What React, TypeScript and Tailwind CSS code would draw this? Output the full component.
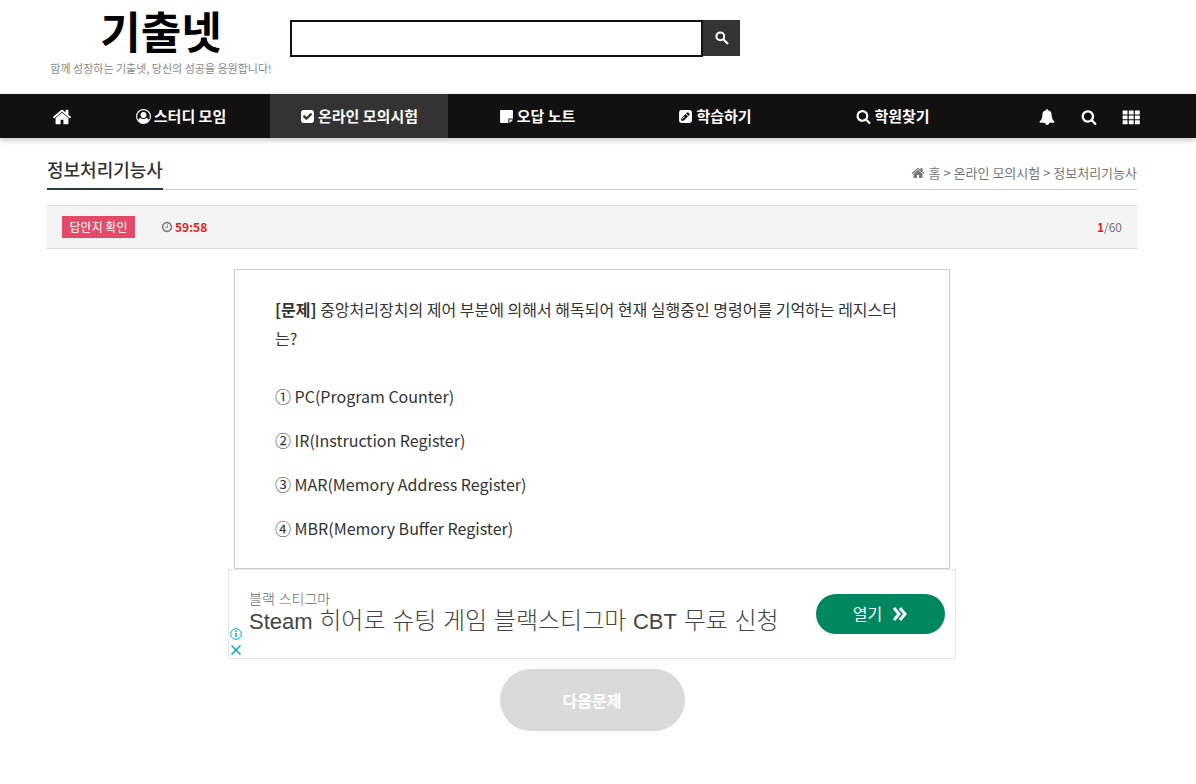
import type { ReactNode } from "react";

type IconProps = { className?: string };

function Glyph({ className, children }: IconProps & { children: ReactNode }) {
  return (
    <svg viewBox="0 0 1792 1792" fill="currentColor" aria-hidden="true" className={className}>
      {children}
    </svg>
  );
}

const HomeIcon = ({ className }: IconProps) => (
  <Glyph className={className}>
    <path d="M1472 992v480q0 26-19 45t-45 19h-384v-384h-256v384h-384q-26 0-45-19t-19-45v-480q0-1 .5-3t.5-3l575-474 575 474q1 2 1 6zm223-69l-62 74q-8 9-21 11h-3q-13 0-21-7l-692-577-692 577q-12 8-24 7-13-2-21-11l-62-74q-8-10-7-23.5t11-21.5l719-599q32-26 76-26t76 26l244 204v-195q0-14 9-23t23-9h192q14 0 23 9t9 23v408l219 182q10 8 11 21.5t-7 23.5z" />
  </Glyph>
);

const SearchIcon = ({ className }: IconProps) => (
  <Glyph className={className}>
    <path d="M1216 832q0-185-131.5-316.5t-316.5-131.5-316.5 131.5-131.5 316.5 131.5 316.5 316.5 131.5 316.5-131.5 131.5-316.5zm512 832q0 52-38 90t-90 38q-54 0-90-38l-343-342q-179 124-399 124-143 0-273.5-55.5t-225-150-150-225-55.5-273.5 55.5-273.5 150-225 225-150 273.5-55.5 273.5 55.5 225 150 150 225 55.5 273.5q0 220-124 399l343 343q37 37 37 90z" />
  </Glyph>
);

const BellIcon = ({ className }: IconProps) => (
  <Glyph className={className}>
    <path d="M912 1696q0-16-16-16-59 0-101.5-42.5t-42.5-101.5q0-16-16-16t-16 16q0 73 51.5 124.5t124.5 51.5q16 0 16-16zm816-288q0 52-38 90t-90 38h-448q0 106-75 181t-181 75-181-75-75-181h-448q-52 0-90-38t-38-90q50-42 91-88t85-119.5 74.5-158.5 50-206 19.5-260q0-152 117-282.5t307-158.5q-8-19-8-39 0-40 28-68t68-28 68 28 28 68q0 20-8 39 190 28 307 158.5t117 282.5q0 139 19.5 260t50 206 74.5 158.5 85 119.5 91 88z" />
  </Glyph>
);

const GridIcon = ({ className }: IconProps) => (
  <Glyph className={className}>
    {[256, 736, 1216].map((y) =>
      [64, 672, 1280].map((x) => <rect key={`${x}-${y}`} x={x} y={y} width="490" height="390" rx="50" />)
    )}
  </Glyph>
);

const ClockIcon = ({ className }: IconProps) => (
  <Glyph className={className}>
    <path d="M1024 544v448q0 14-9 23t-23 9h-320q-14 0-23-9t-9-23v-64q0-14 9-23t23-9h224v-352q0-14 9-23t23-9h64q14 0 23 9t9 23zm416 352q0-148-73-273t-198-198-273-73-273 73-198 198-73 273 73 273 198 198 273 73 273-73 198-198 73-273zm224 0q0 209-103 385.5t-279.5 279.5-385.5 103-385.5-103-279.5-279.5-103-385.5 103-385.5 279.5-279.5 385.5-103 385.5 103 279.5 279.5 103 385.5z" />
  </Glyph>
);

const UserIcon = ({ className }: IconProps) => (
  <Glyph className={className}>
    <circle cx="896" cy="896" r="896" />
    <path
      d="M896 150a746 746 0 0 0-610 1176q60-220 250-270 100 150 360 150t360-150q190 50 250 270a746 746 0 0 0-610-1176z"
      fill="#111"
    />
    <circle cx="896" cy="720" r="350" />
  </Glyph>
);

const CheckSquareIcon = ({ className }: IconProps) => (
  <Glyph className={className}>
    <path d="M813 1299l614-614q19-19 19-45t-19-45l-102-102q-19-19-45-19t-45 19l-467 467-211-211q-19-19-45-19t-45 19l-102 102q-19 19-19 45t19 45l358 358q19 19 45 19t45-19zm851-883v960q0 119-84.5 203.5t-203.5 84.5h-960q-119 0-203.5-84.5t-84.5-203.5v-960q0-119 84.5-203.5t203.5-84.5h960q119 0 203.5 84.5t84.5 203.5z" />
  </Glyph>
);

const NoteIcon = ({ className }: IconProps) => (
  <Glyph className={className}>
    <path d="M1664 1120h-448q-96 0-96 96v448h-896q-96 0-96-96v-1344q0-96 96-96h1344q96 0 96 96zM1248 1656v-408h408q-20 80-60 120l-228 228q-40 40-120 60z" />
  </Glyph>
);

const PencilSquareIcon = ({ className }: IconProps) => (
  <Glyph className={className}>
    <path
      fillRule="evenodd"
      d="M416 128h960q288 0 288 288v960q0 288-288 288h-960q-288 0-288-288v-960q0-288 288-288zM380 1412h288l520-520-288-288-520 520zM968 536l288 288 132-132q60-60 0-120l-168-168q-60-60-120 0zM476 1164l300-300 52 52-300 300h-52z"
    />
  </Glyph>
);

const menu = [
  { label: "스터디 모임", Icon: UserIcon },
  { label: "온라인 모의시험", Icon: CheckSquareIcon, active: true },
  { label: "오답 노트", Icon: NoteIcon },
  { label: "학습하기", Icon: PencilSquareIcon },
  { label: "학원찾기", Icon: SearchIcon },
];

const tools = [
  { label: "알림", Icon: BellIcon, size: "size-4" },
  { label: "검색", Icon: SearchIcon, size: "size-4" },
  { label: "전체메뉴", Icon: GridIcon, size: "size-[18px]" },
];

const choices = [
  "① PC(Program Counter)",
  "② IR(Instruction Register)",
  "③ MAR(Memory Address Register)",
  "④ MBR(Memory Buffer Register)",
];

function Header() {
  return (
    <header>
      <div className="pr-3">
        <div className="mx-auto flex h-[94px] max-w-[1120px] items-start px-[15px]">
          <a href="#" className="flex w-[228px] flex-col items-center pt-[2px] text-black">
            <span className="text-[44px] leading-[56px] font-bold">기출넷</span>
            <span className="pt-[2px] text-[11px] leading-4 whitespace-nowrap text-[#888]">
              함께 성장하는 기출넷, 당신의 성공을 응원합니다!
            </span>
          </a>
          <form className="mt-5 ml-[15px] flex w-[450px] items-start">
            <input
              type="text"
              aria-label="검색어"
              className="h-[37px] min-w-0 flex-1 border-2 border-[#111] bg-white px-2 text-base outline-none"
            />
            <button type="button" aria-label="검색" className="flex h-9 w-[37px] items-center justify-center bg-[#333] text-white">
              <svg viewBox="0 0 14 14" aria-hidden="true" className="size-[14px]" fill="none" stroke="currentColor" strokeWidth="2">
                <circle cx="5.3" cy="5.3" r="3.9" />
                <path d="M8.300 8.300l4.700 4.700" />
              </svg>
            </button>
          </form>
        </div>
      </div>
      <nav className="bg-[#111] pr-3 text-white shadow-[0_2px_6px_rgba(0,0,0,0.25)]">
        <div className="mx-auto flex h-11 max-w-[1120px]">
          <a href="#" aria-label="홈" className="flex w-[60px] items-center justify-center pt-[2px]">
            <HomeIcon className="size-5" />
          </a>
          <div className="flex w-[890px]">
            {menu.map(({ label, Icon, active }) => (
              <a
                key={label}
                href="#"
                className={`flex flex-1 items-center justify-center gap-[3px] text-[15px] leading-5 font-bold ${active ? "bg-[#333]" : ""}`}
              >
                <Icon className="size-[15px]" />
                {label}
              </a>
            ))}
          </div>
          <div className="ml-auto flex pt-[2px]">
            {tools.map(({ label, Icon, size }) => (
              <button key={label} type="button" aria-label={label} className="flex w-[42px] items-center justify-center">
                <Icon className={size} />
              </button>
            ))}
          </div>
        </div>
      </nav>
    </header>
  );
}

function AdBanner() {
  return (
    <aside className="relative flex h-[90px] w-full max-w-[728px] items-center justify-between border border-[#e5e5e5] bg-white pr-[10px] pl-5">
      <div className="pb-[2px] font-['Liberation_Sans','Noto_Sans_CJK_KR',sans-serif] font-light">
        <p className="text-sm leading-4 text-[#666]">블랙 스티그마</p>
        <p className="text-2xl leading-7 text-[#444]">
          <span className="text-[22px]">Steam</span> 히어로 슈팅 게임 블랙스티그마 <span className="text-[22px]">CBT</span> 무료 신청
        </p>
      </div>
      <a href="#" className="flex h-10 w-[129px] items-center justify-center gap-[10px] rounded-full bg-[#00875f] text-base text-white">
        <span className="pb-[2px]">열기</span>
        <svg viewBox="0 0 16 14" aria-hidden="true" className="h-[14px] w-4" fill="none" stroke="currentColor" strokeWidth="3">
          <path d="M2 1l5 6-5 6M8 1l5 6-5 6" />
        </svg>
      </a>
      <div className="absolute bottom-[2px] left-[1px] flex flex-col gap-1 text-[#00aecd]">
        <svg viewBox="0 0 12 12" aria-hidden="true" className="size-3" fill="none" stroke="currentColor">
          <circle cx="6" cy="6" r="5.3" />
          <path d="M6 5v4M6 2.5v1.5" strokeWidth="1.5" />
        </svg>
        <svg viewBox="0 0 12 12" aria-hidden="true" className="size-3" fill="none" stroke="currentColor" strokeWidth="1.5">
          <path d="M1.5 1.5l9 9M10.5 1.5l-9 9" />
        </svg>
      </div>
    </aside>
  );
}

export default function App() {
  return (
    <div className="min-h-screen bg-white font-['Noto_Sans_CJK_KR',sans-serif] text-[#333]">
      <Header />
      <div className="pr-3">
        <main className="mx-auto max-w-[1120px] px-[15px] pt-4">
          <div className="flex h-9 items-stretch justify-between border-b border-[#ccc]">
            <h1 className="-mb-px border-b-2 border-[#2c3a47] pt-[3px] text-lg leading-6 font-medium">정보처리기능사</h1>
            <p className="flex items-center gap-1 pt-[2px] text-[13px] leading-5 text-[#777]">
              <HomeIcon className="size-[14px]" />
              홈 &gt; 온라인 모의시험 &gt; 정보처리기능사
            </p>
          </div>

          <div className="mt-[15px] flex h-11 items-center border-y border-[#ddd] bg-[#f4f4f4] px-[15px]">
            <button type="button" className="h-[22px] w-[73px] bg-[#e34a6a] text-xs text-white">
              답안지 확인
            </button>
            <span className="ml-[26px] flex items-center gap-[2px] text-xs font-bold text-[#e02020]">
              <ClockIcon className="size-3 text-[#777]" />
              59:58
            </span>
            <span className="ml-auto text-xs text-[#777]">
              <b className="text-[#e02020]">1</b>/60
            </span>
          </div>

          <div className="mt-5 flex flex-col items-center">
            <section className="w-full max-w-[716px] border border-[#ccc] px-10 pt-[25px] pb-[18px] text-base">
              <p className="leading-[29px]">
                <b className="font-bold">[문제]</b> 중앙처리장치의 제어 부분에 의해서 해독되어 현재 실행중인 명령어를 기억하는 레지스터는?
              </p>
              <ul className="mt-[21px]">
                {choices.map((choice) => (
                  <li key={choice}>
                    <button type="button" className="h-11 w-full text-left">
                      {choice}
                    </button>
                  </li>
                ))}
              </ul>
            </section>
            <AdBanner />
            <button type="button" className="mt-[10px] h-[62px] w-[185px] rounded-full bg-[#dadada] text-base font-bold text-white">
              다음문제
            </button>
          </div>
        </main>
      </div>
    </div>
  );
}
